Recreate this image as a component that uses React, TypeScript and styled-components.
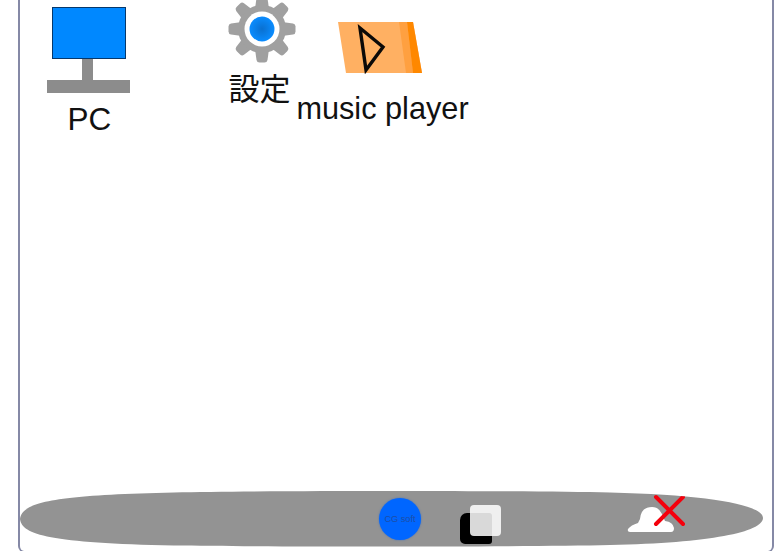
import React from "react";
import styled, { createGlobalStyle } from "styled-components";

const Global = createGlobalStyle`
  html, body { margin: 0; padding: 0; background: #fff; overflow: hidden; }
  body { font-family: "Liberation Sans", "Noto Sans CJK JP", sans-serif; }
`;

const Screen = styled.div`
  box-sizing: border-box;
  position: relative;
  width: 756px;
  height: 552px;
  margin-left: 18px;
  border: 2px solid #8589a6;
  border-top: none;
  border-bottom-width: 1px;
  border-radius: 0 0 6px 6px;
  display: flex;
  flex-direction: column;
  justify-content: flex-end;
  overflow: hidden;
`;

const DesktopIcon = styled.div<{ $x: number; $y: number; $w: number }>`
  position: absolute;
  left: ${(p) => p.$x}px;
  top: ${(p) => p.$y}px;
  width: ${(p) => p.$w}px;
  display: flex;
  flex-direction: column;
  align-items: center;
`;

const Label = styled.span<{ $size?: number; $gap: number; $shift?: number }>`
  font-size: ${(p) => p.$size ?? 30.7}px;
  line-height: 35px;
  margin-top: ${(p) => p.$gap}px;
  margin-left: ${(p) => p.$shift ?? 0}px;
  color: #111;
  white-space: nowrap;
`;

const Monitor = styled.div`
  box-sizing: border-box;
  width: 74px;
  height: 52px;
  background: #0088ff;
  border: 1px solid #06386b;
`;

const Stem = styled.div`
  width: 11px;
  height: 21px;
  margin-right: 2px;
  background: #8c8c8c;
`;

const Base = styled.div`
  width: 83px;
  height: 13px;
  background: #8c8c8c;
`;

const Taskbar = styled.div`
  flex: none;
  height: 56px;
  width: 743px;
  margin: 0 0 4px 0;
  background: #939393;
  clip-path: path("M0 28 C2 12 30 4 154 1.5 C250 -0.5 500 -0.5 590 1.5 C690 4 743 14 743 27 C743 41 690 52 590 54 C500 56 250 56 154 54.5 C30 52 2 44 0 28 Z");
  display: flex;
  align-items: center;
  padding-left: 359px;
  box-sizing: border-box;
`;

const SoftButton = styled.div`
  width: 42px;
  height: 42px;
  border-radius: 50%;
  background: #0066ff;
  box-shadow: 0 0 2px #3f6fc0;
  color: #1c4ea8;
  font-size: 9.2px;
  display: flex;
  align-items: center;
  justify-content: center;
  white-space: nowrap;
  margin-right: 39px;
`;

const WindowStack = styled.div`
  position: relative;
  width: 41px;
  height: 39px;
  margin-top: 11px;
  margin-right: 126px;
`;

const BackWindow = styled.div`
  position: absolute;
  left: 0;
  bottom: 0;
  width: 32px;
  height: 31px;
  background: #000;
  border-radius: 7px 3px 3px 5px;
`;

const FrontWindow = styled.div`
  position: absolute;
  right: 0;
  top: 0;
  width: 31px;
  height: 31px;
  background: rgba(255, 255, 255, 0.85);
  border-radius: 4px;
`;

const Tray = styled.div`
  position: relative;
  width: 57px;
  height: 38px;
  margin-top: -10px;
`;

const TrayArt = styled.svg`
  display: block;
  overflow: visible;
`;

const GearArt = styled.svg`
  margin-left: 4px;
`;

const PlayerArt = styled.svg`
  margin-left: -3px;
`;

const gearTeeth = [0, 45, 90, 135, 180, 225, 270, 315];

export default function App() {
  return (
    <Screen>
      <Global />
      <DesktopIcon $x={27} $y={7} $w={83}>
        <Monitor />
        <Stem />
        <Base />
        <Label $size={31.5} $gap={9} $shift={2}>PC</Label>
      </DesktopIcon>
      <DesktopIcon $x={207} $y={-6} $w={66}>
        <GearArt width="68" height="70" viewBox="-34 -35 68 70">
          {gearTeeth.map((a) => (
            <path key={a} d="M-7 -20 L-5.5 -31 Q-5 -33.5 -2.5 -33.5 L2.5 -33.5 Q5 -33.5 5.5 -31 L7 -20 Z" fill="#a0a0a0" transform={`rotate(${a})`} />
          ))}
          <circle r="24" fill="#a0a0a0" />
          <circle r="17.5" fill="#fff" />
          <defs>
            <radialGradient id="hub">
              <stop offset="0" stopColor="#0a70d0" />
              <stop offset="1" stopColor="#0a8cff" />
            </radialGradient>
          </defs>
          <circle r="12.5" fill="url(#hub)" />
        </GearArt>
        <Label $gap={8} $shift={-1} $size={31}>設定</Label>
      </DesktopIcon>
      <DesktopIcon $x={277} $y={21} $w={171}>
        <PlayerArt width="86" height="53" viewBox="0 0 86 53">
          <polygon points="0,1 75,1 84,52 8,52" fill="#ffb062" />
          <polygon points="61,1 69,1 75,52 68,52" fill="#ffa040" />
          <polygon points="69,1 75,1 84,52 75,52" fill="#ff8800" />
          <polygon points="22,7 45,26 28,49" fill="none" stroke="#0c0a08" strokeWidth="3.4" />
        </PlayerArt>
        <Label $gap={17}>music player</Label>
      </DesktopIcon>
      <Taskbar>
        <SoftButton>CG soft</SoftButton>
        <WindowStack>
          <BackWindow />
          <FrontWindow />
        </WindowStack>
        <Tray>
          <TrayArt width="57" height="38" viewBox="0 0 57 38">
            <path
              d="M3 37 Q0 37 1 34 Q4 30 11 28 Q12 26 13 24 Q14 12 25 12 Q32 12 35 19 L38 26 Q46 27 47 33 Q47 37 44 37 Z"
              fill="#fff"
            />
            <path d="M29 29 L56 2 M29 2 L56 29" stroke="#f4000c" strokeWidth="4" strokeLinecap="round" fill="none" />
          </TrayArt>
        </Tray>
      </Taskbar>
    </Screen>
  );
}
